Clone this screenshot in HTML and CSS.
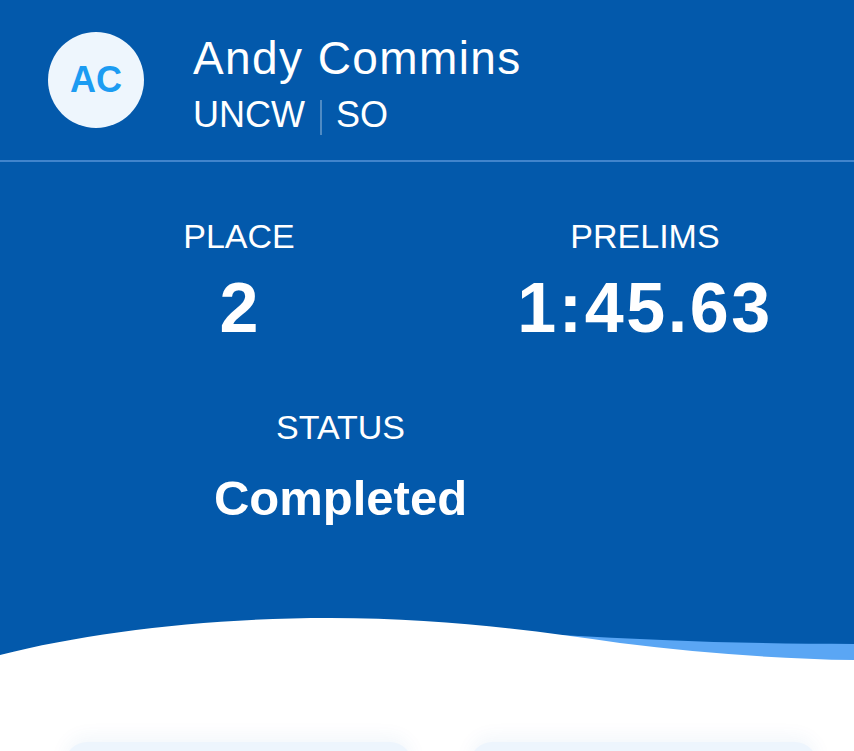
FILE: index.html
```html
<!DOCTYPE html>
<html lang="en">
<head>
  <meta charset="UTF-8">
  <title>Andy Commins</title>
  <link rel="stylesheet" href="styles.css">
</head>
<body>

<div class="screen">
  <header class="hero">
    <div class="profile">
      <div class="avatar">AC</div>
      <div class="who">
        <div class="name">Andy Commins</div>
        <div class="meta">UNCW<span class="sep"></span>SO</div>
      </div>
    </div>

    <div class="stats">
      <div class="stat stat-place">
        <div class="stat-label">PLACE</div>
        <div class="stat-value">2</div>
      </div>
      <div class="stat stat-prelims">
        <div class="stat-label">PRELIMS</div>
        <div class="stat-value time">1:45.63</div>
      </div>
      <div class="stat stat-status">
        <div class="stat-label">STATUS</div>
        <div class="stat-value word">Completed</div>
      </div>
    </div>

    <!-- vlna pod hlavičkou -->
    <svg class="wave" viewBox="0 0 854 80" preserveAspectRatio="none">
      <path d="M560,38 C660,44 760,47 854,47 L854,80 L560,80 Z" fill="#5aa6f4"/>
      <path d="M0,58 C90,35 210,21 330,21 C440,21 530,33 620,46 C700,56 780,62 854,63 L854,80 L0,80 Z" fill="#ffffff"/>
    </svg>
  </header>

  <main class="cards">
    <div class="card"></div>
    <div class="card"></div>
  </main>
</div>

</body>
</html>
```

FILE: styles.css
```css
body {
  margin: 0;
  font-family: "Liberation Sans", Arial, sans-serif;
  background-color: white;
  color: white;
}
.screen {
  height: 100vh;
  overflow: hidden;
}
.hero {
  background-color: #0359ab;
}
.profile {
  display: flex;
  align-items: flex-start;
  gap: 49px;
  padding: 32px 48px 25px;
  border-bottom: 2px solid #4184cc;
}
.avatar {
  width: 96px;
  height: 96px;
  border-radius: 50%;
  background-color: #eef6fd;
  color: #1c9cf2;
  font-size: 36px;
  font-weight: bold;
  display: flex;
  align-items: center;
  justify-content: center;
}
.who {
  margin-top: 0;
}
.name {
  font-size: 46px;
  line-height: 52px;
  letter-spacing: 1.4px;
}
.meta {
  margin-top: 11px;
  font-size: 36px;
  line-height: 40px;
  display: flex;
  align-items: center;
}
.sep {
  width: 2px;
  height: 35px;
  margin: 4px 14px 0 15px;
  background-color: rgba(255, 255, 255, 0.3);
}
.stats {
  display: grid;
  grid-template-columns: repeat(4, 1fr);
  row-gap: 61px;
  padding: 54px 6px 0 36px;
  text-align: center;
}
.stat-place {
  grid-column: 1 / 3;
}
.stat-prelims {
  grid-column: 3 / 5;
}
.stat-status {
  grid-column: 1 / 4;
}
.stat-label {
  font-size: 34px;
  line-height: 40px;
}
.stat-value {
  margin-top: 14px;
  font-size: 70px;
  line-height: 76px;
  font-weight: bold;
}
.stat-value.time {
  letter-spacing: 2.6px;
}
.stat-value.word {
  margin-top: 23px;
  font-size: 49px;
  line-height: 56px;
}
.wave {
  display: block;
  width: 100%;
  height: 80px;
  margin-top: 71px;
}
.cards {
  display: grid;
  grid-template-columns: 347px 347px;
  gap: 58px;
  padding: 65px 0 0 65px;
}
.card {
  height: 120px;
  border-radius: 22px;
  background-color: #edf5fd;
  box-shadow: 0 -6px 18px rgba(3, 89, 171, 0.05);
}
```
